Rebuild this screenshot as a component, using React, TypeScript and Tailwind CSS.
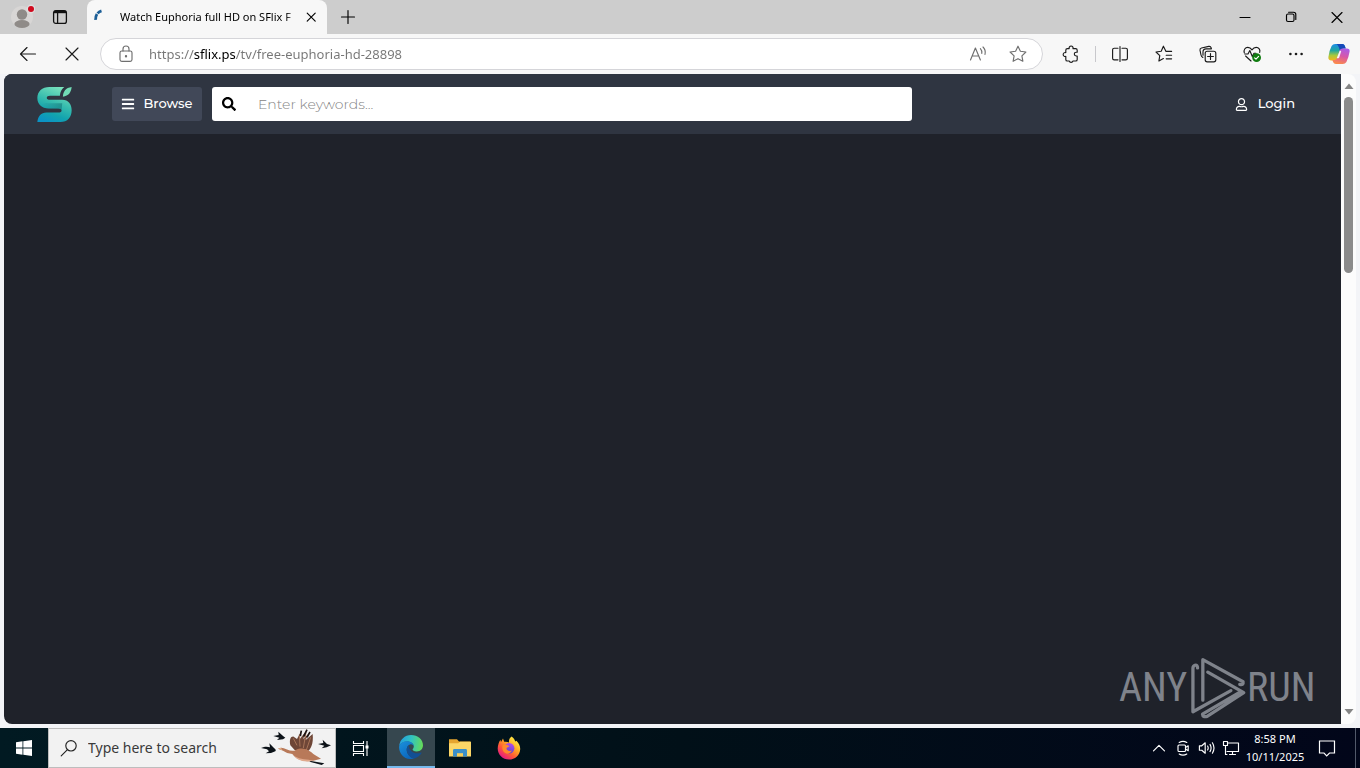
import React from "react";
import { FaBars, FaSearch, FaRegUser } from "react-icons/fa";

type IconProps = { className?: string; children: React.ReactNode; box?: string };

function Line({ className = "size-5", children, box = "0 0 20 20" }: IconProps) {
  return (
    <svg
      viewBox={box}
      className={className}
      fill="none"
      stroke="currentColor"
      strokeWidth="1.15"
      strokeLinecap="round"
      strokeLinejoin="round"
      aria-hidden="true"
    >
      {children}
    </svg>
  );
}

function ToolButton({ label, children }: { label: string; children: React.ReactNode }) {
  return (
    <button type="button" aria-label={label} className="flex h-8 w-11 shrink-0 items-center justify-center text-[#1b1b1b]">
      {children}
    </button>
  );
}

function TabStrip() {
  return (
    <header className="flex h-[34px] shrink-0 bg-[#cdcdcd] text-black">
      <button type="button" aria-label="Profile" className="flex w-11 items-center justify-center">
        <svg viewBox="0 0 26 26" className="size-[26px]" aria-hidden="true">
          <circle cx="13" cy="13" r="11" fill="#d8d6d5" />
          <circle cx="13" cy="10.5" r="5.2" fill="#8f8b88" />
          <ellipse cx="13" cy="20" rx="7.6" ry="4" fill="#8f8b88" />
          <circle cx="22" cy="5" r="4.4" fill="#dedede" />
          <circle cx="22" cy="5" r="3" fill="#d00a1e" />
        </svg>
      </button>
      <button type="button" aria-label="Tab actions" className="flex w-8 items-center justify-center">
        <svg viewBox="0 0 16 16" className="size-4" fill="none" stroke="#111" strokeWidth="1.3" aria-hidden="true">
          <rect x="1.6" y="1.6" width="12.8" height="12.8" rx="2.2" />
          <path d="M2 3H14" strokeWidth="2.4" />
          <path d="M5.6 4V14" />
        </svg>
      </button>
      <div className="ml-[11px] flex w-60 items-center rounded-t-lg bg-[#f7f7f7] pl-1.5 pr-2">
        <svg viewBox="0 0 16 16" className="size-4 shrink-0" fill="none" stroke="#1c5f97" aria-hidden="true">
          <path d="M8.5 1.8C4.6 3 2.4 6.2 2.6 11" strokeWidth="2.8" strokeDasharray="4.6 1 6" />
        </svg>
        <span className="ml-[11px] min-w-0 flex-1 whitespace-nowrap bg-linear-to-r from-black from-90% to-[#d0d0d0] to-95% bg-clip-text font-['Noto_Sans',sans-serif] text-[11px] text-transparent">
          Watch Euphoria full HD on SFlix F
        </span>
        <button type="button" aria-label="Close tab" className="flex h-5 w-4 items-center justify-center">
          <Line className="size-4" box="0 0 16 16">
            <path d="M4.2 4.2L12.2 12.2M12.2 4.2L4.2 12.2" />
          </Line>
        </button>
      </div>
      <button type="button" aria-label="New tab" className="flex w-[42px] items-center justify-center">
        <Line className="size-4" box="0 0 16 16">
          <path d="M8 1.5V14.5M1.5 8H14.5" />
        </Line>
      </button>
      <div className="ml-auto flex">
        <button type="button" aria-label="Minimize" className="flex w-[46px] items-center justify-center">
          <Line className="size-4" box="0 0 16 16">
            <path d="M3 8.5H13" />
          </Line>
        </button>
        <button type="button" aria-label="Restore" className="flex w-[46px] items-center justify-center">
          <Line className="size-4" box="0 0 16 16">
            <rect x="3.5" y="5" width="7.5" height="7.5" rx="1.5" />
            <path d="M5.6 3.2H10.5Q12.8 3.2 12.8 5.5V10.4" />
          </Line>
        </button>
        <button type="button" aria-label="Close" className="flex w-[46px] items-center justify-center">
          <Line className="size-4" box="0 0 16 16">
            <path d="M3 3.5L13 13.5M13 3.5L3 13.5" />
          </Line>
        </button>
      </div>
    </header>
  );
}

function Toolbar() {
  return (
    <nav aria-label="Browser toolbar" className="flex h-10 shrink-0 items-center bg-[#f7f7f7] pl-1.5">
      <ToolButton label="Back">
        <Line>
          <path d="M17.5 10H2.6M9 3.5L2.5 10L9 16.5" />
        </Line>
      </ToolButton>
      <ToolButton label="Stop loading">
        <Line>
          <path d="M4 4L16 16M16 4L4 16" />
        </Line>
      </ToolButton>
      <form className="ml-1.5 flex h-8 min-w-0 flex-1 items-center rounded-full border border-[#d5d5d9] bg-white text-[#6f6f6f]">
        <span className="flex w-12 shrink-0 justify-center pl-0.5">
          <Line>
            <rect x="4" y="7" width="12" height="10.4" rx="1.8" />
            <path d="M7 7V5A3 3 0 0 1 13 5V7" />
            <circle cx="10" cy="12.2" r=".6" fill="currentColor" />
          </Line>
        </span>
        <input
          aria-label="Address"
          defaultValue="https://sflix.ps/tv/free-euphoria-hd-28898"
          className="min-w-0 flex-1 bg-[linear-gradient(90deg,#767676_45px,#000_45px,#000_87px,#767676_87px)] bg-clip-text font-['Noto_Sans',sans-serif] text-[13px] leading-5 text-transparent outline-none"
        />
        <button type="button" aria-label="Read aloud" className="flex w-10 items-center justify-center">
          <Line>
            <path d="M2.5 16L7.4 4L12.4 16M4.2 12H10.7M12.4 4.6Q14.2 6.6 13.8 9.4M15 3Q18 6 17 10.4" />
          </Line>
        </button>
        <button type="button" aria-label="Add to favorites" className="mr-1 flex w-10 items-center justify-center">
          <Line>
            <path d="M10 2.2L12.4 7.2L17.9 8L13.9 11.8L14.9 17.3L10 14.7L5.1 17.3L6.1 11.8L2.1 8L7.6 7.2Z" />
          </Line>
        </button>
      </form>
      <div className="ml-1.5 flex items-center">
        <ToolButton label="Extensions">
          <Line>
            <path d="M6.4 4.6H8.2A2 2 0 1 1 12 4.6H14.6Q16.2 4.6 16.2 6.2V8.2H15.2A1.9 1.9 0 1 0 15.2 12H16.2V15.4Q16.2 17 14.6 17H12A2 2 0 0 1 8.2 17H6.4Q4.8 17 4.8 15.4V12.4A2 2 0 1 1 4.8 8.6V6.2Q4.8 4.6 6.4 4.6Z" />
          </Line>
        </ToolButton>
        <span className="mx-0.5 h-4 w-px bg-[#c8c8cc]" />
        <ToolButton label="Split screen">
          <Line>
            <path d="M8 4.2H4.2Q2.6 4.2 2.6 5.8V14.2Q2.6 15.8 4.2 15.8H8M12 4.2H15.8Q17.4 4.2 17.4 5.8V14.2Q17.4 15.8 15.8 15.8H12M10 2.5V17.5" />
          </Line>
        </ToolButton>
        <ToolButton label="Favorites">
          <Line>
            <path d="M17.6 7.4H12L9.4 2.2L7.2 7.2L2 8L5.8 11.7L4.9 17L9.4 14.6M12.2 11.2H17.6M12.2 14.8H17.6" />
          </Line>
        </ToolButton>
        <ToolButton label="Collections">
          <Line>
            <rect x="7.2" y="7.2" width="10.6" height="10.6" rx="2" />
            <path d="M12.5 9.6V15.4M9.6 12.5H15.4M4.8 13.4Q3.4 12.8 3 11L2 6.2Q1.7 4.4 3.5 4L10.8 2.4Q12.6 2.1 13.2 3.9L13.4 4.8H8Q5 4.8 5 8V11.2" />
          </Line>
        </ToolButton>
        <ToolButton label="Browser essentials">
          <Line>
            <path d="M2.3 8.8C1.4 5.8 3.2 3.4 5.8 3.4C7.8 3.4 9 4.4 10 5.8C11 4.4 12.2 3.4 14.2 3.4C16.8 3.4 18.5 5.8 17.7 8.4M3.6 12L9 17M2.8 10H6L7.8 6.6L10.3 12.4L12 9.2H14" />
            <circle cx="14.6" cy="13.6" r="4.4" fill="#107c10" stroke="none" />
            <path d="M12.6 13.8L14 15.2L16.6 12.4" stroke="#fff" />
          </Line>
        </ToolButton>
        <ToolButton label="Settings and more">
          <svg viewBox="0 0 20 20" className="size-5" fill="currentColor" aria-hidden="true">
            <circle cx="4.4" cy="10" r="1.3" />
            <circle cx="10" cy="10" r="1.3" />
            <circle cx="15.6" cy="10" r="1.3" />
          </svg>
        </ToolButton>
        <button type="button" aria-label="Copilot" className="flex h-8 w-[42px] items-center justify-center">
          <svg viewBox="0 0 24 24" className="size-6" aria-hidden="true">
            <defs>
              <linearGradient id="cpA" x1="0.2" y1="0" x2="0.2" y2="1">
                <stop offset="0" stopColor="#1f8ee8" />
                <stop offset="0.4" stopColor="#20a7a0" />
                <stop offset="0.7" stopColor="#a8c93c" />
                <stop offset="1" stopColor="#f5b51e" />
              </linearGradient>
              <linearGradient id="cpB" x1="0.7" y1="0" x2="0.4" y2="1">
                <stop offset="0" stopColor="#a95be8" />
                <stop offset="0.5" stopColor="#d957a6" />
                <stop offset="1" stopColor="#fb8a4b" />
              </linearGradient>
            </defs>
            <path d="M8.2 2H15.4Q17.2 2 17.9 4L18.7 6.4H16.5Q14.6 6.4 14 8.4L11.8 16Q11 18.4 8.6 18.4H4.4Q1 18.4 1.4 15Q2.4 8 4.6 4Q5.8 2 8.2 2Z" fill="url(#cpA)" />
            <path d="M9.4 2H15.4Q17.2 2 17.9 4L18.7 6.4H16.5Q14.6 6.4 14 8.4L13.2 11Q12.4 4 9.4 2Z" fill="#1649b8" />
            <path d="M15.8 22H9Q6.8 22 6.1 20L5.4 17.9H7.8Q9.8 17.9 10.4 15.8L12.6 8.6Q13.3 6.4 15.6 6.4H19.8Q23 6.4 22.6 9.6Q21.6 16 19.4 20Q18.2 22 15.8 22Z" fill="url(#cpB)" />
            <path d="M12.8 8.4L9.8 16Q11.2 16.8 12.2 15.4L14.2 9.2Z" fill="#f7f7f7" />
          </svg>
        </button>
      </div>
    </nav>
  );
}

function SiteLogo() {
  return (
    <svg viewBox="0 0 102 104" className="h-[35px] w-[35px]" aria-hidden="true">
      <defs>
        <linearGradient id="siteS" x1="0.7" y1="0" x2="0.3" y2="1">
          <stop offset="0" stopColor="#7ce3bd" />
          <stop offset="0.45" stopColor="#36bcae" />
          <stop offset="0.75" stopColor="#12a3ae" />
          <stop offset="1" stopColor="#0b93c4" />
        </linearGradient>
        <linearGradient id="siteShade" x1="0" y1="0" x2="1" y2="0">
          <stop offset="0" stopColor="#0b5e78" stopOpacity="0" />
          <stop offset="1" stopColor="#075d66" stopOpacity="0.45" />
        </linearGradient>
      </defs>
      <path
        d="M36 0H80C72 7 68 14 67 26H38Q28 26 28 32Q28 38 38 38H74C92 38 102 51 102 69C102 90 90 104 68 104H0C2 87 11 76 27 76H62Q72 76 72 70Q72 64 62 64H34C13 64 0 51 0 33C0 13 14 0 36 0Z"
        fill="url(#siteS)"
      />
      <path d="M10 56Q18 64 34 64H62Q72 64 72 70L74 48H30Q16 47 10 56Z" fill="url(#siteShade)" />
      <path d="M102 0C100 17 93 26 76 29C76 14 84 2 102 0Z" fill="#72dcb6" />
    </svg>
  );
}

function Watermark() {
  return (
    <div className="flex items-center font-['Roboto_Condensed','Liberation_Sans_Narrow',sans-serif] text-[40px] leading-none text-[#7f838b]">
      <span className="w-[70px]">ANY</span>
      <svg
        viewBox="264 34 174 194"
        className="h-[64px] w-[58px]"
        fill="none"
        stroke="#7f838b"
        strokeWidth="10"
        strokeLinecap="round"
        strokeLinejoin="round"
        aria-hidden="true"
      >
        <path d="M289 70Q289 60 281 62Q275 64 275 71V203L390 139" />
        <path d="M305 168V45L427 112Q429 123 417 120" />
        <path d="M320 83L429 145L318 217Q305 221 304 210L415 145" />
      </svg>
      <span className="w-[66px]">RUN</span>
    </div>
  );
}

function Site() {
  return (
    <div className="flex min-h-0 flex-1 bg-[#f3f4f7] px-1 pb-1">
      <main className="flex min-w-0 flex-1 flex-col overflow-hidden rounded-l-lg bg-[#1f222a] font-['Montserrat','Inter',sans-serif]">
        <div className="flex h-[60px] shrink-0 items-center bg-[#2f3541] pl-[33px] pr-[46px]">
          <a href="#home" aria-label="SFlix home">
            <SiteLogo />
          </a>
          <button type="button" className="ml-10 flex h-[34px] w-[90px] items-center justify-center gap-2 rounded-[3px] bg-[#414858] text-[13px] font-medium text-white">
            <FaBars className="size-3.5" />
            Browse
          </button>
          <form className="ml-2.5 flex h-[34px] w-[700px] items-center rounded-[3px] bg-white">
            <button type="button" aria-label="Search" className="flex w-[46px] shrink-0 items-center pl-2.5 text-black">
              <FaSearch className="size-3.5" />
            </button>
            <input
              aria-label="Keywords"
              placeholder="Enter keywords..."
              className="min-w-0 flex-1 text-sm font-light outline-none placeholder:text-[#858585]"
            />
          </form>
          <a href="#login" className="ml-auto flex items-center gap-2.5 text-[13px] font-medium text-white">
            <FaRegUser className="size-[13px]" />
            Login
          </a>
        </div>
        <div className="mt-auto flex justify-end pb-1 pr-7">
          <Watermark />
        </div>
      </main>
      <div className="flex w-[15px] flex-col items-center rounded-r-lg bg-[#fcfcfc] py-2">
        <svg viewBox="0 0 10 8" className="h-2 w-2.5" fill="#858585" aria-hidden="true">
          <path d="M5 1.5L9.5 7H.5Z" />
        </svg>
        <div className="mt-[7px] h-44 w-[9px] rounded-full bg-[#8b8b8b]" />
        <svg viewBox="0 0 10 8" className="mt-auto h-2 w-2.5" fill="#858585" aria-hidden="true">
          <path d="M5 6.5L9.5 1H.5Z" />
        </svg>
      </div>
    </div>
  );
}

function Geese() {
  return (
    <svg viewBox="0 0 216 120" className="h-10 w-[72px] shrink-0" aria-hidden="true">
      <g fill="#0c1218">
        <path d="M0 60C12 55 20 56 27 58L25 46L39 60Q47 66 43 70L30 75L14 76L24 70L18 64Z" />
        <path d="M37 24L53 21L52 11L67 25L73 29L66 34L48 36L55 29Z" />
        <path d="M171 48L187 45L185 35L198 48L210 52L197 58L182 61L190 53Z" />
        <path d="M146 98L190 106L182 111L146 101Z" />
      </g>
      <path d="M88 52C84 34 90 24 98 26L108 33L121 8L116 34L138 5L126 34L147 12L133 37L155 18C158 48 149 65 139 71L101 66Z" fill="#6e4637" />
      <path d="M97 31L108 52M115 20L117 56M135 13L127 60M149 28L136 66" stroke="#a87559" strokeWidth="3" />
      <path d="M121 8L118 24M138 5L128 26M147 12L138 28" stroke="#1c1413" strokeWidth="5" />
      <path d="M51 62Q62 55 76 64Q96 72 104 66C126 54 146 67 157 78L180 92L157 98C128 103 105 94 94 78Q76 76 66 68Z" fill="#b87959" />
      <path d="M101 85C118 95 139 94 157 98C128 105 106 96 95 78Z" fill="#e0a98d" />
      <path d="M51 62L60 59L64 66Z" fill="#e4b48f" />
    </svg>
  );
}

function Edge() {
  return (
    <svg viewBox="0 0 24 24" className="size-6" aria-hidden="true">
      <defs>
        <linearGradient id="edTop" x1="0" y1="0.4" x2="1" y2="0.5">
          <stop offset="0" stopColor="#229de0" />
          <stop offset="0.5" stopColor="#32c3c0" />
          <stop offset="1" stopColor="#66db58" />
        </linearGradient>
        <linearGradient id="edSide" x1="0" y1="0" x2="0.6" y2="1">
          <stop offset="0" stopColor="#1b91dc" />
          <stop offset="1" stopColor="#0b66bc" />
        </linearGradient>
      </defs>
      <path d="M.2 11C.8 4.7 5.8 0 12 0C19 0 24 4.8 24 10.2C24 14 21.2 16.4 17.8 16.4C14.8 16.4 13.6 15.4 13.6 14.6C13.6 13.8 14.8 13.4 14.8 11.6C14.8 9 12 6.6 8.2 6.6C4.6 6.6 1.6 8.4.2 11Z" fill="url(#edTop)" />
      <path d="M.1 12C.4 8.8 4 6.3 8.2 6.3C12.2 6.3 14.8 8.8 14.8 11.6C14.8 10 13.2 9 11.6 9.2C8.6 10 7.5 12.7 7.7 15C8 19.5 11.6 22.8 15.2 23.5C6.5 26 0 19 .1 12Z" fill="url(#edSide)" />
      <path d="M9.7 10.2C7.7 12 7.1 14.8 8.3 17.6C9.8 21.6 13 23.8 15.6 23.4C18.6 22.5 21.2 20.5 22.6 18.1C22.9 17.5 22.5 17.2 22 17.5C16.8 20 10 16.8 9.7 10.2Z" fill="#124f94" />
    </svg>
  );
}

function Explorer() {
  return (
    <svg viewBox="0 0 22 20" className="h-5 w-[22px]" aria-hidden="true">
      <path d="M0 1.2H8L10 3.4H21.4V18H0Z" fill="#e5a52f" />
      <path d="M0 5.2L9.2 5.2L11 3.8H22V18.4H0Z" fill="#fbd667" />
      <path d="M4 18.6V12.4Q4 11 5.4 11H16.6Q18 11 18 12.4V18.6H14V15.4H8V18.6Z" fill="#3a8fc8" />
      <path d="M8 15.4H14V18.4H8Z" fill="#f8ce58" />
    </svg>
  );
}

function Firefox() {
  return (
    <svg viewBox="0 0 24 24" className="size-6" aria-hidden="true">
      <defs>
        <linearGradient id="fxBody" x1="0.85" y1="0.1" x2="0.2" y2="0.95">
          <stop offset="0" stopColor="#fff14a" />
          <stop offset="0.35" stopColor="#ffac22" />
          <stop offset="0.65" stopColor="#ff5a36" />
          <stop offset="1" stopColor="#e31587" />
        </linearGradient>
        <linearGradient id="fxCore" x1="0.6" y1="0" x2="0.3" y2="1">
          <stop offset="0" stopColor="#b24cec" />
          <stop offset="1" stopColor="#5545c8" />
        </linearGradient>
      </defs>
      <path d="M14.6.4C16.8 1.8 18 4 18.2 5.6L19.4 4.8C22.2 7.6 23.3 10.2 23.2 13.2C22.8 19.2 18 23.6 12 23.6C5.6 23.6.7 18.8.7 12.6C.7 9.4 2 6 3.4 3.8L4 6L6 2.6L7.2 5.8C9 5.4 10.8 5.8 12 6.4C11.6 3.8 12.7 1.6 14.6.4Z" fill="url(#fxBody)" />
      <circle cx="12.2" cy="12.2" r="5.2" fill="url(#fxCore)" />
      <path d="M5.6 9.4C7.4 8 9.4 8.2 10.6 9.3L12.6 10C11.6 11.4 9.8 11.3 9.4 12.6C9.6 14.6 12.6 15.6 14.8 14.6C14 17.4 10.6 18.4 8.2 17C5.6 15.6 4.8 12.4 5.6 9.4Z" fill="#ff8a2b" />
    </svg>
  );
}

function Taskbar() {
  return (
    <footer className="flex h-10 shrink-0 bg-linear-to-r from-[#011a22] via-[#011018] to-[#02061a] font-['Noto_Sans',sans-serif] text-white">
      <button type="button" aria-label="Start" className="flex w-12 items-center justify-center">
        <svg viewBox="0 0 16 16" className="size-4" fill="#fff" aria-hidden="true">
          <path d="M0 2.2L6.5 1.3V7.5H0ZM7.3 1.2L16 0V7.5H7.3ZM0 8.4H6.5V14.7L0 13.8ZM7.3 8.4H16V16L7.3 14.8Z" />
        </svg>
      </button>
      <label className="flex w-72 items-center border border-[#bdbdbd] bg-[#f2f2f2] text-[#222]">
        <Line className="ml-[11px] size-[18px]" box="0 0 18 18">
          <circle cx="11" cy="6.8" r="5.2" />
          <path d="M7.2 10.8L1.2 16.8" />
        </Line>
        <input
          aria-label="Type here to search"
          placeholder="Type here to search"
          className="ml-2.5 min-w-0 flex-1 text-sm outline-none placeholder:text-[#3a3a3a]"
        />
        <Geese />
        <span className="w-0.5" />
      </label>
      <button type="button" aria-label="Task view" className="mr-[3px] flex w-12 items-center justify-center">
        <svg viewBox="0 0 17 17" className="size-[17px]" fill="none" stroke="#fff" strokeWidth="1.1" aria-hidden="true">
          <path d="M1.5 1V3.5H11.5V1M1.5 16V13.5H11.5V16M1.5 5.5H11.5V11.5H1.5ZM15 1V16" />
          <path d="M13.5 7H16.5" strokeWidth="3" />
        </svg>
      </button>
      <button type="button" aria-label="Microsoft Edge" className="flex w-12 items-center justify-center border-b-2 border-[#76b9ed] bg-[#36474f]">
        <Edge />
      </button>
      <button type="button" aria-label="File Explorer" className="flex w-[49px] items-center justify-center">
        <Explorer />
      </button>
      <button type="button" aria-label="Firefox" className="flex w-[49px] items-center justify-center">
        <Firefox />
      </button>
      <div className="ml-auto flex items-center">
        <button type="button" aria-label="Show hidden icons" className="flex w-6 justify-center">
          <Line className="size-4" box="0 0 16 16">
            <path d="M2.5 10.8L8 5.3L13.5 10.8" />
          </Line>
        </button>
        <button type="button" aria-label="Meet now" className="flex w-6 justify-center">
          <Line className="size-4" box="0 0 16 16">
            <rect x="3" y="5" width="7.5" height="6.5" rx="1" />
            <path d="M10.5 7.4L13.2 5.8V10.7L10.5 9.1M4.2 2.4Q8 .2 11.8 2.4M4.2 14Q8 16.2 11.8 14" />
          </Line>
        </button>
        <button type="button" aria-label="Volume" className="flex w-6 justify-center">
          <Line className="h-4 w-[18px]" box="0 0 18 16">
            <path d="M1.4 5.8H3.8L7.2 2.8V13.2L3.8 10.2H1.4ZM9.6 6Q10.8 8 9.6 10M12 4.4Q14.2 8 12 11.6M14.4 2.8Q17.6 8 14.4 13.2" />
          </Line>
        </button>
        <button type="button" aria-label="Network" className="flex w-6 justify-center">
          <Line className="size-[18px]" box="0 0 18 18">
            <path d="M6 4H16.5V12.5H5M10.5 12.5V15.5M7.5 15.5H13.5M1.5 2.5H5.5V6.5H1.5ZM3.5 6.5V15.5H5" />
          </Line>
        </button>
        <time className="w-16 text-center text-[11px] leading-[18px]">
          <span className="block">8:58 PM</span>
          <span className="block">10/11/2025</span>
        </time>
        <button type="button" aria-label="Notifications" className="ml-0.5 flex w-9 justify-center">
          <svg viewBox="0 0 18 18" className="size-[18px]" fill="none" stroke="#fff" strokeWidth="1.2" aria-hidden="true">
            <path d="M1.5 2H16.5V14H11.5L8.7 16.8L6 14H1.5Z" />
          </svg>
        </button>
        <span className="ml-2.5 mr-1 h-10 w-px bg-[#52596a]" />
      </div>
    </footer>
  );
}

export default function App() {
  return (
    <div className="flex h-screen min-w-0 flex-col overflow-hidden bg-[#f7f7f7]">
      <TabStrip />
      <Toolbar />
      <Site />
      <Taskbar />
    </div>
  );
}
